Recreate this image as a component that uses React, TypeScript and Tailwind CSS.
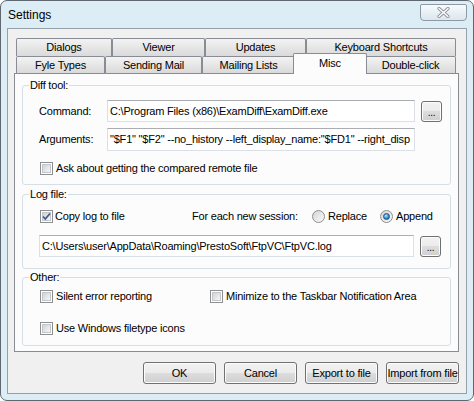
import React from 'react';

// Win7 basic "Settings" dialog

const tabRow1 = [
  { label: 'Dialogs', w: 'w-[96px]' },
  { label: 'Viewer', w: 'w-[93px]' },
  { label: 'Updates', w: 'w-[101px]' },
  { label: 'Keyboard Shortcuts', w: 'w-[150px]' },
];

const tabRow2 = [
  { label: 'Fyle Types', w: 'w-[89px]' },
  { label: 'Sending Mail', w: 'w-[97px]' },
  { label: 'Mailing Lists', w: 'w-[93px]' },
  { label: 'Misc', w: 'w-[70px]', active: true },
  { label: 'Double-click', w: 'w-[91px]' },
];

function Tab({ label, w, active }: { label: string; w: string; active?: boolean }) {
  if (active) {
    return (
      <div className="relative z-10 -mx-[2px] -mb-[1px] flex h-[21px] w-[74px] justify-center rounded-t-[2px] border-x border-t border-[#898c95] bg-[#fcfcfc] pt-[1px]">
        {label}
      </div>
    );
  }
  return (
    <div
      className={`${w} flex h-full items-center justify-center rounded-t-[2px] border-x border-t border-[#898c95] bg-linear-to-b from-[#f3f3f3] to-[#dadada]`}
    >
      {label}
    </div>
  );
}

function Checkbox({ checked }: { checked?: boolean }) {
  return (
    <div className="relative h-[13px] w-[13px] shrink-0 border border-[#8e8f8f] bg-white p-[1px]">
      <div className="h-full w-full border border-[#c3c6cb] bg-linear-to-br from-[#cfd2d6] to-[#f7f7f7]" />
      {checked && (
        <svg className="absolute left-0 top-0" width="11" height="11" viewBox="0 0 11 11">
          <path d="M2 5.5 L4.3 8 L9 2.5" fill="none" stroke="#46598a" strokeWidth="1.8" />
        </svg>
      )}
    </div>
  );
}

function Radio({ checked }: { checked?: boolean }) {
  return (
    <div className="flex h-[13px] w-[13px] shrink-0 items-center justify-center rounded-full border border-[#8e8f8f] bg-linear-to-br from-[#d2d4d7] to-[#fbfbfb]">
      {checked && (
        <div className="h-[7px] w-[7px] rounded-full border border-[#1d4f82] bg-[radial-gradient(circle_at_40%_35%,#b6e6ff,#3b8fd0_55%,#0f447c)]" />
      )}
    </div>
  );
}

function Input({ value, w }: { value: string; w: string }) {
  return (
    <div
      className={`${w} flex h-[22px] items-center overflow-hidden whitespace-nowrap border border-[#dbdfe6] border-t-[#abadb3] bg-white pl-[2px]`}
    >
      {value}
    </div>
  );
}

function BrowseButton() {
  return (
    <div className="ml-[6px] flex h-[21px] w-[21px] items-end justify-center rounded-[3px] border border-[#707070] bg-[linear-gradient(#f2f2f2,#ebebeb_50%,#dddddd_50%,#cfcfcf)] pb-[3px] text-[10px] leading-none shadow-[inset_0_0_0_1px_#fcfcfc]">
      ...
    </div>
  );
}

function Button({ label }: { label: string }) {
  return (
    <div className="flex h-[22px] w-[73px] items-center justify-center rounded-[3px] border border-[#707070] bg-[linear-gradient(#f2f2f2,#ebebeb_50%,#dddddd_50%,#cfcfcf)] shadow-[inset_0_0_0_1px_#fcfcfc]">
      {label}
    </div>
  );
}

function Group({ title, className, children }: { title: string; className: string; children: React.ReactNode }) {
  return (
    <fieldset className={`rounded-[3px] border border-[#d5dfe5] ${className}`}>
      <legend className="ml-[6px] px-[1px] leading-[13px]">{title}</legend>
      {children}
    </fieldset>
  );
}

export default function App() {
  return (
    <div className="h-[401px] w-[474px] font-[family-name:Liberation_Sans,Arial,sans-serif] text-[11px] tracking-[-0.2px] text-black">
      <div className="flex h-full w-full flex-col rounded-[7px] border border-[#5f6870] bg-[#dcedf6] px-[6px] pb-[6px]">
        {/* title bar */}
        <div className="flex h-[27px] shrink-0 items-start">
          <div className="ml-[1px] mt-[7px] text-[12px] leading-[14px] tracking-normal">Settings</div>
          <div className="ml-auto mt-[3px] flex h-[17px] w-[47px] items-center justify-center rounded-b-[4px] rounded-t-[2px] border border-[#8c99a6] bg-linear-to-b from-[#f7fbfd] to-[#dbe6ee]">
            <svg width="13" height="11" viewBox="0 0 13 11">
              <path d="M2 1.5 L11 9.5 M11 1.5 L2 9.5" stroke="#8f9499" strokeWidth="3.2" strokeLinecap="round" />
              <path d="M2 1.5 L11 9.5 M11 1.5 L2 9.5" stroke="#ffffff" strokeWidth="1.4" strokeLinecap="round" />
            </svg>
          </div>
        </div>

        {/* client area */}
        <div className="flex flex-1 flex-col border border-[#96a0aa] bg-[#f0f0f0] pl-[6px] pt-[9px]">
          {/* tabs */}
          <div className="ml-[2px] flex h-[18px]">
            {tabRow1.map((t) => (
              <Tab key={t.label} {...t} />
            ))}
          </div>
          <div className="ml-[2px] flex h-[17px] items-end">
            {tabRow2.map((t) => (
              <Tab key={t.label} {...t} />
            ))}
          </div>

          {/* tab panel */}
          <div className="w-[445px] border border-[#898c95] bg-[#fcfcfc] px-[7px] pb-[5px] pt-[5px]">
            <Group title="Diff tool:" className="pb-[9px]">
              <div className="mt-[8px] flex h-[22px] items-center pl-[16px]">
                <div className="w-[68px]">Command:</div>
                <Input w="w-[308px]" value="C:\Program Files (x86)\ExamDiff\ExamDiff.exe" />
                <BrowseButton />
              </div>
              <div className="mt-[6px] flex h-[23px] items-center pl-[16px]">
                <div className="w-[68px]">Arguments:</div>
                <Input
                  w="w-[308px] h-[23px]"
                  value={'"$F1" "$F2" --no_history --left_display_name:"$FD1" --right_disp'}
                />
              </div>
              <div className="mt-[11px] flex h-[13px] items-center gap-[3px] pl-[17px]">
                <Checkbox />
                <span>Ask about getting the compared remote file</span>
              </div>
            </Group>

            <Group title="Log file:" className="mt-[3px] pb-[11px]">
              <div className="mt-[9px] flex h-[13px] items-center pl-[17px]">
                <div className="flex w-[152px] items-center gap-[2px]">
                  <Checkbox checked />
                  <span>Copy log to file</span>
                </div>
                <div className="w-[120px]">For each new session:</div>
                <div className="flex w-[68px] items-center gap-[3px]">
                  <Radio />
                  <span>Replace</span>
                </div>
                <div className="flex items-center gap-[3px]">
                  <Radio checked />
                  <span>Append</span>
                </div>
              </div>
              <div className="mt-[12px] flex h-[22px] items-center pl-[16px]">
                <Input w="w-[375px]" value="C:\Users\user\AppData\Roaming\PrestoSoft\FtpVC\FtpVC.log" />
                <BrowseButton />
              </div>
            </Group>

            <Group title="Other:" className="mt-[2px] pb-[10px]">
              <div className="mt-[6px] flex h-[13px] items-center pl-[17px]">
                <div className="flex w-[170px] items-center gap-[3px]">
                  <Checkbox />
                  <span>Silent error reporting</span>
                </div>
                <div className="flex items-center gap-[3px]">
                  <Checkbox />
                  <span>Minimize to the Taskbar Notification Area</span>
                </div>
              </div>
              <div className="mt-[19px] flex h-[13px] items-center gap-[3px] pl-[17px]">
                <Checkbox />
                <span>Use Windows filetype icons</span>
              </div>
            </Group>
          </div>

          {/* dialog buttons */}
          <div className="mt-[10px] flex w-[445px] justify-end gap-[8px]">
            <Button label="OK" />
            <Button label="Cancel" />
            <Button label="Export to file" />
            <Button label="Import from file" />
          </div>
        </div>
      </div>
    </div>
  );
}
